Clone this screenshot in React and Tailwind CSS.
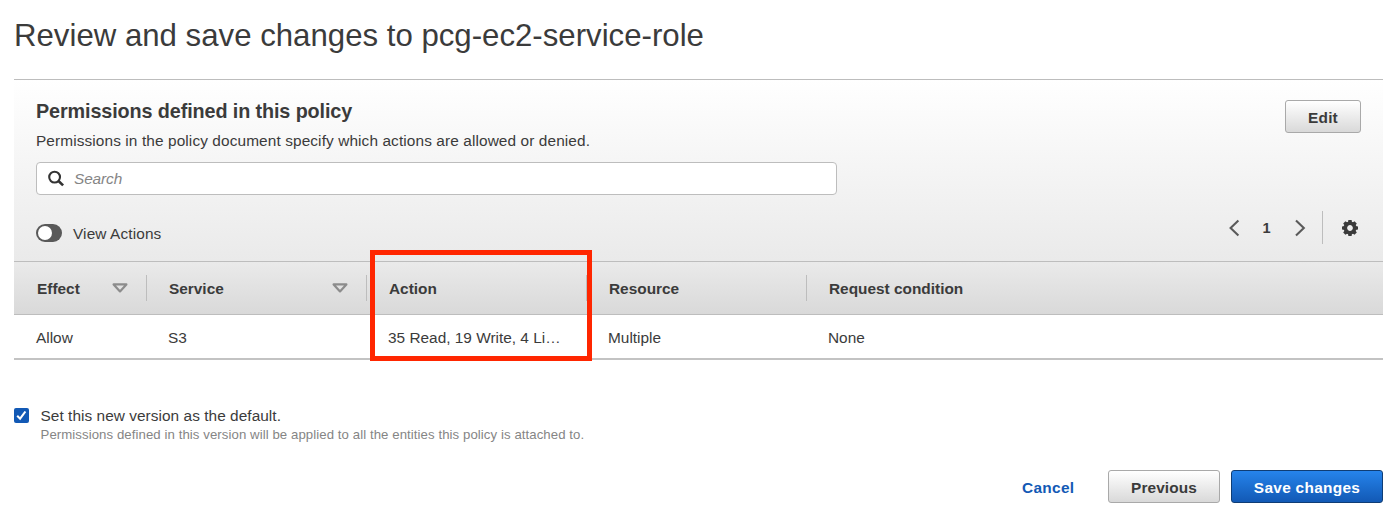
import React from "react";

function SearchIcon() {
  return (
    <svg width="16" height="17" viewBox="0 0 16 17" fill="none" stroke="#333" strokeWidth="2.1">
      <circle cx="6.6" cy="7.1" r="5.4" />
      <path d="M10.5 11l4.6 4.4" strokeWidth="2.6" />
    </svg>
  );
}

function SortIcon() {
  return (
    <svg width="16" height="10" viewBox="0 0 16 10" fill="none" stroke="#8c8c8c" strokeWidth="2.2" strokeLinejoin="round">
      <path d="M1.6 1.4h12.8L8 8.4z" />
    </svg>
  );
}

function Chevron({ d }) {
  return (
    <svg width="11" height="18" viewBox="0 0 11 18" fill="none" stroke="#5a5a5a" strokeWidth="2.1">
      <path d={d} />
    </svg>
  );
}

function GearIcon() {
  const teeth = [0, 45, 90, 135, 180, 225, 270, 315];
  return (
    <svg width="16" height="16" viewBox="-8 -8 16 16">
      <circle r="4.7" fill="none" stroke="#3b3b3b" strokeWidth="3.6" />
      {teeth.map((angle) => (
        <path key={angle} d="M-2.1 -5.3L-1.6 -8H1.6L2.1 -5.3z" fill="#3b3b3b" transform={`rotate(${angle})`} />
      ))}
    </svg>
  );
}

function HeaderCell({ label, sortable, last, width, inset }) {
  return (
    <div className={`flex h-[26px] items-center ${inset} ${width} ${last ? "" : "border-r border-[#bdbdbd]"}`}>
      <span className="flex-1 pt-[2px] pl-px font-bold">{label}</span>
      {sortable && (
        <span className="mr-[18px]">
          <SortIcon />
        </span>
      )}
    </div>
  );
}

const columns = [
  { label: "Effect", value: "Allow", width: "w-[133px]", inset: "pl-[22px]", sortable: true },
  { label: "Service", value: "S3", width: "w-[220px]", inset: "pl-[21px]", sortable: true },
  { label: "Action", value: "35 Read, 19 Write, 4 Li…", width: "w-[220px]", inset: "pl-[21px]" },
  { label: "Resource", value: "Multiple", width: "w-[220px]", inset: "pl-[21px]" },
  { label: "Request condition", value: "None", width: "flex-1", inset: "pl-[21px]", last: true },
];

export default function App() {
  return (
    <main className="h-[530px] bg-white pl-[14px] pr-[14px] font-['Liberation_Sans',Arial,sans-serif] text-[15.4px] leading-[22px] text-[#3b3b3b]">
      <h1 className="flex h-[79px] items-start pt-[16px] text-[31.2px] leading-[40px]">
        <span>Review and save changes to pcg-ec2-service-role</span>
      </h1>

      <section className="relative border-t border-[#bdbdbd]">
        <div className="flex h-[181px] justify-between bg-linear-to-b from-white to-[#eaeaea] pl-[22px] pr-[22px]">
          <div className="w-[801px]">
            <h2 className="pt-[19px] text-[19.8px] leading-[24px] font-bold tracking-[-0.11px]">
              <span>Permissions defined in this policy</span>
            </h2>
            <p className="pt-[7px] tracking-[0.105px]">
              <span>Permissions in the policy document specify which actions are allowed or denied.</span>
            </p>
            <div className="mt-[10px] flex h-[33px] items-center gap-[10px] rounded-[4px] border border-[#bdbdbd] bg-white pl-[11px]">
              <SearchIcon />
              <span className="tracking-[-0.1px] text-[#858585] italic">Search</span>
            </div>
            <div className="mt-[27px] flex items-start gap-[11px]">
              <div className="mt-[2px] flex h-[18px] w-[26px] items-center rounded-full bg-[#595959] pl-[1.5px]">
                <div className="size-[14px] rounded-full bg-white" />
              </div>
              <span className="pt-px tracking-[0.12px]">View Actions</span>
            </div>
          </div>

          <div className="flex flex-col items-end justify-between pt-5 pb-[17px]">
            <button className="h-[33px] w-[76px] rounded-[3px] border border-[#a9a9a9] bg-linear-to-b from-white to-[#d9d9d9] pt-[2px] font-bold tracking-[0.2px]">
              Edit
            </button>
            <div className="flex h-[33px] items-center pr-[3px]">
              <Chevron d="M9.4 1.6L1.6 9l7.8 7.4" />
              <span className="w-[55px] pt-px pr-[2px] text-center text-[14.6px] font-bold">1</span>
              <Chevron d="M1 1.6L8.8 9 1 16.4" />
              <div className="mr-[19px] ml-[16px] h-[33px] w-px bg-[#bdbdbd]" />
              <GearIcon />
            </div>
          </div>
        </div>

        <div className="flex h-[54px] items-center border-y border-[#bdbdbd] bg-linear-to-b from-[#eaeaea] to-[#d9d9d9]">
          {columns.map((column) => (
            <HeaderCell key={column.label} {...column} />
          ))}
        </div>
        <div className="flex h-[45px] items-center border-b-2 border-[#c3c3c3] pt-[3px]">
          {columns.map((column) => (
            <div key={column.label} className={`${column.inset} ${column.width}`}>
              <span>{column.value}</span>
            </div>
          ))}
        </div>

        <div className="absolute top-[170px] left-[356px] h-[111px] w-[222px] border-5 border-[#ff2600]" />
      </section>

      <div className="mt-[45px] flex items-start gap-[11.5px]">
        <div className="mt-[3px] flex size-[15px] items-center justify-center rounded-[2px] bg-[#1259b5]">
          <svg width="11" height="11" viewBox="0 0 11 11" fill="none" stroke="white" strokeWidth="2.1">
            <path d="M1.2 5.8l2.9 2.9 5.3-7.2" />
          </svg>
        </div>
        <div>
          <p className="tracking-[0.05px]">
            <span>Set this new version as the default.</span>
          </p>
          <p className="text-[13.2px] leading-[16px] tracking-[0.08px] text-[#858585]">
            <span>Permissions defined in this version will be applied to all the entities this policy is attached to.</span>
          </p>
        </div>
      </div>

      <div className="mt-[27px] flex justify-end">
        <button className="mr-[33.5px] pt-[2px] font-bold tracking-[0.35px] text-[#1259b5]">Cancel</button>
        <button className="mr-[11px] h-[33px] w-[112px] rounded-[3px] border border-[#a9a9a9] bg-linear-to-b from-white to-[#d9d9d9] pt-[2px] font-bold tracking-[0.1px]">
          Previous
        </button>
        <button className="h-[33px] w-[152px] rounded-[3px] border border-[#0f3d75] bg-linear-to-b from-[#2684ec] to-[#1259b5] pt-[2px] font-bold tracking-[0.3px] text-white">
          Save changes
        </button>
      </div>
    </main>
  );
}
